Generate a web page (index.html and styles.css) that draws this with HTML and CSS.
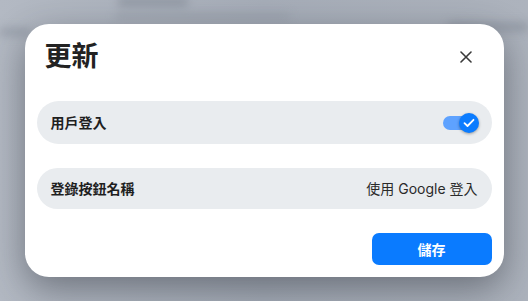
FILE: index.html
```html
<!DOCTYPE html>
<html lang="zh-Hant">
<head>
    <meta charset="UTF-8">
    <title>更新</title>
    <link rel="stylesheet" href="styles.css">
</head>
<body>
<div class="backdrop">
    <div class="blur-bits">
        <div class="bit bit-a"></div>
        <div class="bit bit-b"></div>
        <div class="bit bit-c"></div>
        <div class="bit bit-d"></div>
    </div>
</div>

<div class="overlay">
    <div class="modal">
        <div class="modal-header">
            <h2 class="modal-title">更新</h2>
            <button class="close-button" aria-label="關閉">
                <svg width="12" height="12" viewBox="0 0 12 12">
                    <path d="M1 1 L11 11 M11 1 L1 11" stroke="#3a3a3a" stroke-width="1.6" stroke-linecap="round"/>
                </svg>
            </button>
        </div>

        <div class="setting-row row-tall">
            <span class="setting-label">用戶登入</span>
            <div class="toggle on">
                <div class="toggle-track"></div>
                <div class="toggle-knob">
                    <svg width="12" height="10" viewBox="0 0 12 10">
                        <path d="M1.5 5.2 L4.5 8 L10.5 1.8" fill="none" stroke="#fff" stroke-width="1.8" stroke-linecap="round" stroke-linejoin="round"/>
                    </svg>
                </div>
            </div>
        </div>

        <div class="setting-row">
            <span class="setting-label">登錄按鈕名稱</span>
            <span class="setting-value">使用 Google 登入</span>
        </div>

        <div class="modal-footer">
            <button class="save-button">儲存</button>
        </div>
    </div>
</div>
</body>
</html>
```

FILE: styles.css
```css
body {
    margin: 0;
    width: 528px;
    height: 301px;
    overflow: hidden;
    font-family: "Inter", "Noto Sans CJK TC", sans-serif;
    background: #a9b0bb;
}
.backdrop {
    position: fixed;
    inset: 0;
    background: linear-gradient(90deg, #b3b9c3 0%, #a6adb8 50%, #adb3bd 100%);
}
.blur-bits {
    position: absolute;
    inset: 0;
    filter: blur(4px);
}
.bit {
    position: absolute;
    background: #8f96a2;
    border-radius: 3px;
}
.bit-a {
    left: 118px;
    top: -2px;
    width: 70px;
    height: 8px;
}
.bit-b {
    left: 115px;
    top: 14px;
    width: 175px;
    height: 4px;
    background: #979ea9;
}
.bit-c {
    left: 0;
    top: 28px;
    width: 30px;
    height: 8px;
    background: #9aa1ac;
}
.bit-d {
    left: 448px;
    top: 22px;
    width: 80px;
    height: 10px;
    background: #969da8;
}
.overlay {
    position: fixed;
    inset: 0;
    display: flex;
    justify-content: center;
    align-items: center;
}
.modal {
    width: 479px;
    height: 253px;
    box-sizing: border-box;
    padding: 12px;
    background: #fff;
    border-radius: 24px;
    box-shadow: 0 12px 36px rgba(30, 35, 45, 0.45);
    display: flex;
    flex-direction: column;
}
.modal-header {
    height: 42px;
    display: flex;
    align-items: center;
    justify-content: space-between;
    padding: 0 20px 0 8px;
    margin-bottom: 23px;
}
.modal-title {
    margin: 0;
    font-size: 27px;
    font-weight: 700;
    color: #222;
    line-height: 1;
}
.close-button {
    border: none;
    background: none;
    padding: 0;
    width: 12px;
    height: 12px;
    display: flex;
    cursor: pointer;
}
.setting-row {
    height: 41px;
    box-sizing: border-box;
    padding: 0 14px;
    background: #e9ecef;
    border-radius: 22px;
    display: flex;
    align-items: center;
    justify-content: space-between;
    margin-bottom: 24px;
}
.row-tall {
    height: 44px;
    padding-right: 13px;
}
.setting-label {
    font-size: 14px;
    font-weight: 700;
    color: #1f1f1f;
    line-height: 1;
}
.setting-value {
    font-size: 14px;
    color: #2a2a2a;
    line-height: 1;
}
.toggle {
    position: relative;
    width: 36px;
    height: 20px;
    display: flex;
    align-items: center;
}
.toggle-track {
    width: 30px;
    height: 14px;
    border-radius: 7px;
    background: #5ea2ff;
}
.toggle-knob {
    position: absolute;
    right: 0;
    top: 0;
    width: 20px;
    height: 20px;
    border-radius: 50%;
    background: #0b7cff;
    box-shadow: 0 1px 3px rgba(0, 0, 0, 0.35);
    display: flex;
    justify-content: center;
    align-items: center;
}
.modal-footer {
    margin-top: auto;
    display: flex;
    justify-content: flex-end;
}
.save-button {
    width: 120px;
    height: 32px;
    border: none;
    border-radius: 7px;
    background: #0a7bff;
    color: #fff;
    font-family: inherit;
    font-size: 14px;
    font-weight: 700;
    cursor: pointer;
}
```
